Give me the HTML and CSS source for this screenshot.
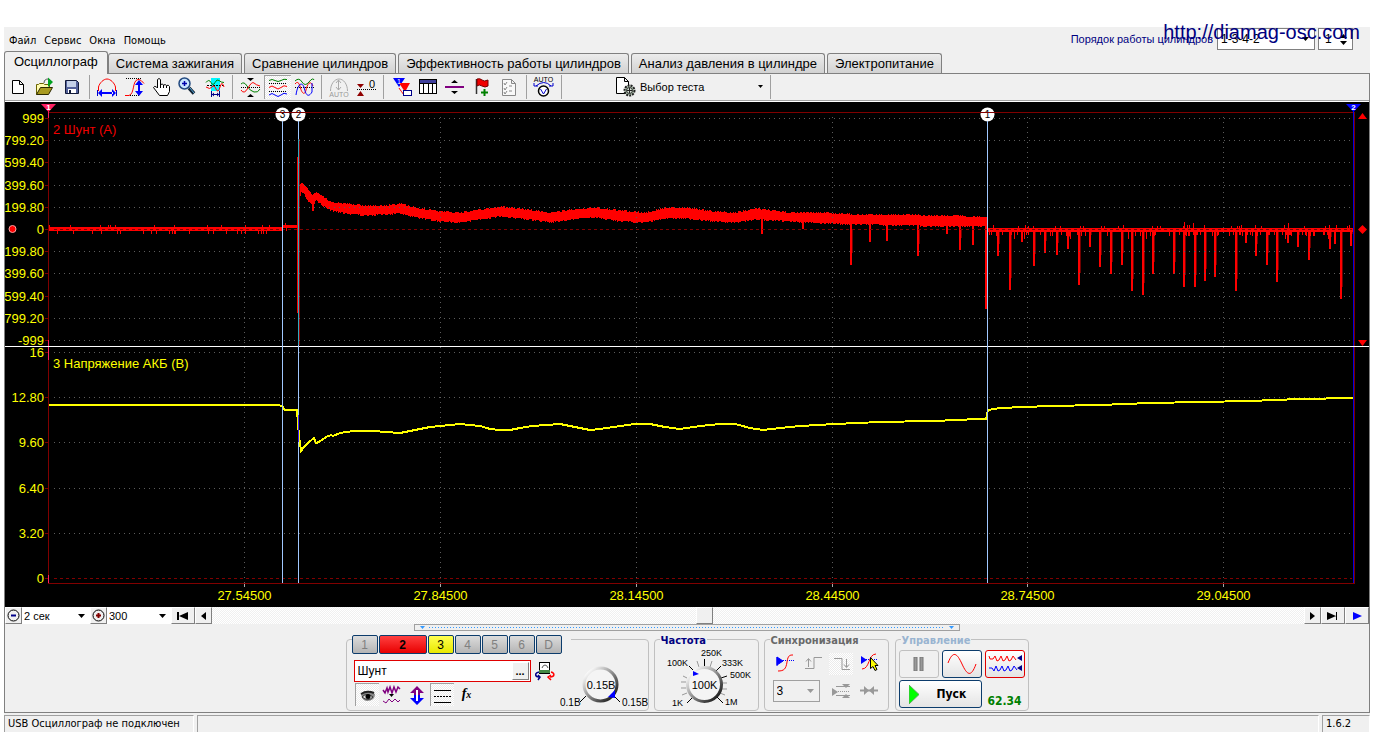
FILE: index.html
```html
<!DOCTYPE html>
<html lang="ru">
<head>
<meta charset="utf-8">
<title>USB Осциллограф</title>
<link rel="stylesheet" href="styles.css">
</head>
<body>
<a class="site-link" href="http://diamag-osc.com">http://diamag-osc.com</a>
<div class="app">
  <header class="header">
    <nav class="menu">
      <button>Файл</button><button>Сервис</button><button>Окна</button><button>Помощь</button>
    </nav>
    <div class="order">
      <label for="order">Порядок работы цилиндров</label>
      <span class="combo order-combo">
        <select id="order"><option>1-3-4-2</option></select>
        <svg width="7" height="4"><path d="M0 0h7L3.500 4z"/></svg>
      </span>
      <span class="combo spin">
        <input type="text" value="1" aria-label="Номер цилиндра">
        <svg width="7" height="11"><path d="M0 4h7L3.500 0zM0 7h7L3.500 11z"/></svg>
      </span>
    </div>
  </header>

  <div class="tabs" role="tablist">
    <button class="tab active" role="tab">Осциллограф</button>
    <button class="tab" role="tab">Система зажигания</button>
    <button class="tab" role="tab">Сравнение цилиндров</button>
    <button class="tab" role="tab">Эффективность работы цилиндров</button>
    <button class="tab" role="tab">Анализ давления в цилиндре</button>
    <button class="tab" role="tab">Электропитание</button>
  </div>

  <main class="page">
    <div class="toolbar">
      <button class="tool" aria-label="Новый"><svg viewBox="5 75 27 24"><path d="M12.500 80.500h7l4 4v9h-11zM19.500 80.500v4h4" fill="#fff" stroke="#000"/></svg></button>
      <button class="tool" aria-label="Открыть"><svg viewBox="32 75 27 24"><path d="M36.500 94.500v-10h2l1-1h4l1 1h5v3" fill="#fffbb0" stroke="#6b6400"/><path d="M36.500 94.500l4-7h12l-4 7z" fill="#a89a20" stroke="#2b2800"/><path d="M44 83c0-3 2-4 4-4" fill="none" stroke="#555"/><path d="M48 77.500l5 4.500-5 5z" fill="#00a020"/></svg></button>
      <button class="tool" aria-label="Сохранить"><svg viewBox="59 75 27 24"><path d="M65.500 80.500h11l2 2v11h-13z" fill="#52609a" stroke="#101838"/><path d="M67 81h9v6h-9z" fill="#c4d0e8"/><path d="M68 89h8v4h-8z" fill="#fff"/><path d="M69 90h2v3h-2z" fill="#101838"/></svg></button>
      <i class="sep"></i>
      <button class="tool" aria-label="Период"><svg viewBox="94 75 27 24"><path d="M98.500 91v-4c1-4 5-8 8.500-8s7.500 4 8.500 8v4" fill="none" stroke="#f00"/><path d="M97.500 90v6M116.500 90v6" stroke="#00c" fill="none"/><path d="M98 93l4-4v8zM116 93l-4-4v8zM101 92h12v2h-12z" fill="#00f"/></svg></button>
      <button class="tool" aria-label="Амплитуда"><svg viewBox="121 75 27 24"><path d="M126 78.500h16M126 95.500h14" stroke="#000" stroke-dasharray="1 1"/><path d="M125 95.500h4c6-2 3-15 9-16 3 0 4 2 6 4" fill="none" stroke="#f00"/><path d="M139 80l-4 5h3v6h-3l4 5 4-5h-3v-6h3z" fill="#00f"/></svg></button>
      <button class="tool" aria-label="Рука"><svg viewBox="148 75 27 24"><path d="M157.500 88v-8.500q1.500-2 3 0v5q2-1 3 .5q2-1 3 .5q2-1 3 1v5l-2 4h-8l-6-8q1-2 3-.5z" fill="#fff" stroke="#000"/><path d="M160.500 84v4M163.500 85v3M166.500 86v2" stroke="#000"/></svg></button>
      <button class="tool" aria-label="Лупа"><svg viewBox="175 75 27 24"><path d="M189 88l5 5.500" stroke="#123" stroke-width="3.500"/><path d="M190 88l4 5" stroke="#5ad"/><circle cx="184.500" cy="83.500" r="5.500" fill="#c8e4ff" stroke="#234a80" stroke-width="1.500"/><path d="M182 83.500h5M184.500 81v5" stroke="#00a" stroke-width="1.500"/></svg></button>
      <button class="tool" aria-label="Участок"><svg viewBox="202 75 27 24"><path d="M211 78h9v13h-9z" fill="#00f6ff"/><path d="M206 82.500q3-4 5 0t4 0 4-2 5 2" fill="none" stroke="#008000"/><path d="M207 85.500h17" stroke="#000" stroke-dasharray="2 1"/><path d="M206 87q4 3 6 0t4 2 4-2 4 0" fill="none" stroke="#f00"/><path d="M211.500 91v6M219.500 91v6M212 94.500h8" stroke="#008"/><path d="M212 94.500l2-2v4zM219 94.500l-2-2v4z" fill="#008"/></svg></button>
      <i class="sep"></i>
      <button class="tool" aria-label="Совместить"><svg viewBox="237 75 27 24"><path d="M241 87.500h19" stroke="#000" stroke-dasharray="1 1"/><path d="M241 84q3-3 6 2t7 6 6-3" fill="none" stroke="#008000"/><path d="M241 90q3 5 7-2t6-5 6 3" fill="none" stroke="#f00"/><path d="M247 78h7l-3.500 3zM247 97h7l-3.500-3z" fill="#000"/></svg></button>
      <button class="tool pressed" aria-label="Раздельно"><svg viewBox="264 75 27 24"><path d="M269 80.500q3-2 6 0t6 0 6-1" fill="none" stroke="#008000"/><path d="M269 83.500h18M269 91.500h18" stroke="#000" stroke-dasharray="1 1"/><path d="M269 87.500q3-3 6 0t6 0 6-1" fill="none" stroke="#f00"/><path d="M269 95q3-3 6 0t6 0 6-1" fill="none" stroke="#00f"/></svg></button>
      <button class="tool" aria-label="Наложить"><svg viewBox="291 75 27 24"><path d="M295 81q4-4 7 1t7 0 5-2" fill="none" stroke="#008000"/><path d="M295 87.500h19" stroke="#000" stroke-dasharray="1 1"/><path d="M295 84q3-4 5 2c2 9 5 9 6 4s4-11 7-4" fill="none" stroke="#f00"/><path d="M296 95c1-8 5-15 8-8 2 10 5 10 8 5V83" fill="none" stroke="#00f"/></svg></button>
      <i class="sep"></i>
      <button class="tool" aria-label="Авто масштаб" disabled><svg viewBox="326 75 27 24"><path d="M330.500 91c0-7 4-12 8.500-12s8.500 5 8.500 12" fill="none" stroke="#aaa"/><path d="M338.500 80v10M336 83l2.500-3 2.500 3M336 87l2.500 3 2.500-3" fill="none" stroke="#aaa"/><text class="t7" x="339" y="97" text-anchor="middle" fill="#999">AUTO</text></svg></button>
      <button class="tool" aria-label="Ноль"><svg viewBox="353 75 27 24"><path d="M357 84h7l-3.500 4zM357 96h7l-3.500-5z" fill="#900000"/><path d="M357 89.500h19" stroke="#000" stroke-dasharray="1 1"/><text class="t11" x="369" y="88">0</text></svg></button>
      <i class="sep"></i>
      <button class="tool" aria-label="Фильтр"><svg viewBox="388 75 27 24"><path d="M393 78h12l-6 9z" fill="#00f"/><path d="M399 83h11l-5 9z" fill="#f00"/><path d="M399 88q2 3 5 7" fill="none" stroke="#f00"/><rect x="403.500" y="90.500" width="8" height="5" fill="#fff" stroke="#008"/><text class="t7" x="397" y="84" fill="#fff">1</text></svg></button>
      <button class="tool" aria-label="Таблица"><svg viewBox="415 75 27 24" shape-rendering="crispEdges"><path d="M419.500 79.500h17v14h-17z" fill="#fff" stroke="#000"/><path d="M420 80h16v3h-16z" fill="#40409c"/><path d="M419 83.500h18M423.500 83v11M428.500 83v11M432.500 83v11" stroke="#000"/></svg></button>
      <button class="tool" aria-label="Линия"><svg viewBox="442 75 27 24"><path d="M445 86h19v2h-19z" fill="#800080"/><path d="M451 83h7l-3.500-3zM451 91h7l-3.500 3z"/></svg></button>
      <button class="tool" aria-label="Добавить метку"><svg viewBox="469 75 27 24"><path d="M476.500 79v15" stroke="#333" stroke-width="1.500"/><path d="M477 79q3-1 5 1t6 0v6q-3 2-6 0t-5 0z" fill="#f00000" stroke="#700"/><path d="M484.500 89v7M481 92.500h7" stroke="#008000" stroke-width="2"/></svg></button>
      <button class="tool" aria-label="Список" disabled><svg viewBox="496 75 27 24"><path d="M502.500 79.500h9l4 4v12h-13zM511.500 79.500v4h4" fill="#f8f8f8" stroke="#888"/><path d="M504 83l1 2 2-3M504 88l1 2 2-3M504 92l1 2 2-3M509 86h3M509 91h3" fill="none" stroke="#888"/></svg></button>
      <i class="sep"></i>
      <button class="tool" aria-label="Авто"><svg viewBox="531 75 27 24"><text class="t7" x="543.500" y="82" text-anchor="middle">AUTO</text><path d="M536 86q8-7 15 0M534 83v3h4M553 83v3h-4" fill="none" stroke="#00c"/><circle cx="543.500" cy="91" r="5" fill="#fff" stroke="#000" stroke-width="1.500"/><path d="M540.500 89l3 5 3-5" fill="none" stroke="#00c"/></svg></button>
      <i class="sep"></i>
      <button class="test-select">
        <svg width="22" height="24" viewBox="614 75 22 24"><path d="M616.500 77.500h8l4 4v12h-12zM624.500 77.500v4h4" fill="#fff" stroke="#000"/><circle cx="629.500" cy="90.500" r="5" fill="#b4c8b4" stroke="#222" stroke-width="2" stroke-dasharray="2 1"/><circle cx="629.500" cy="90.500" r="3" fill="#dde8dd" stroke="#222"/><path d="M627 90.500h5M629.500 88v5" stroke="#222"/></svg>
        <span>Выбор теста</span>
        <svg width="5" height="3"><path d="M0 0h5L2.500 3z"/></svg>
      </button>
      <i class="sep"></i>
    </div>

    <svg id="scope" class="scope" viewBox="5 102 1364 505" role="img" aria-label="Осциллограмма"></svg>

    <div class="scroll">
      <button class="sbtn s17" aria-label="Сжать"><svg width="13" height="13"><circle cx="6.500" cy="6.500" r="5.500" fill="none" stroke="#000"/><path d="M4 6.500h5" stroke="#008" stroke-width="2"/></svg></button>
      <span class="combo w68"><select aria-label="Развертка"><option>2 сек</option></select><svg width="7" height="4"><path d="M0 0h7L3.500 4z"/></svg></span>
      <button class="sbtn s17" aria-label="Растянуть"><svg width="13" height="13"><circle cx="6.500" cy="6.500" r="5.500" fill="none" stroke="#000"/><path d="M4 6.500h5M6.500 4v5" stroke="#800000" stroke-width="2"/></svg></button>
      <span class="combo w64"><select aria-label="Масштаб"><option>300</option></select><svg width="7" height="4"><path d="M0 0h7L3.500 4z"/></svg></span>
      <button class="sbtn s24" aria-label="В начало"><svg width="12" height="8"><path d="M0 0h2v8H0zM11 0v8L2 4z"/></svg></button>
      <button class="sbtn s17" aria-label="Назад"><svg width="5" height="8"><path d="M5 0v8L0 4z"/></svg></button>
      <div class="track"><i class="thumb"></i></div>
      <button class="sbtn s17" aria-label="Вперед"><svg width="5" height="8"><path d="M0 0v8l5-4z"/></svg></button>
      <button class="sbtn s24" aria-label="В конец"><svg width="12" height="8"><path d="M9 0h1v8H9zM0 0v8l9-4z"/></svg></button>
      <button class="sbtn s24" aria-label="Воспроизвести"><svg width="9" height="8"><path d="M0 0v8l9-4z" fill="#00f"/></svg></button>
    </div>

    <div class="splitter"><svg width="5" height="3"><path d="M0 0h5L2.500 3z"/></svg><i></i><svg width="5" height="3"><path d="M0 0h5L2.500 3z"/></svg></div>

    <div class="panels">
      <section class="group channel">
        <div class="channels">
          <button>1</button><button class="red">2</button><button class="yellow">3</button><button>4</button><button>5</button><button>6</button><button>D</button>
        </div>
        <div class="channel-body">
          <div>
            <div class="name-row">
              <span class="name"><input type="text" value="Шунт" aria-label="Имя датчика"><button>...</button></span>
              <button class="plain" aria-label="Датчик"><svg width="20" height="20" viewBox="534 661 20 20"><rect x="538.500" y="662.500" width="10" height="11" fill="#fff" stroke="#000"/><path d="M538 670h11v3h-11z" fill="#484"/><path d="M541 668q1-3 3-3t3 3" fill="none" stroke="#555"/><path d="M538 672c-5 1-4 5 0 5M537 675l2 2-2 3" fill="none" stroke="#008" stroke-width="1.500"/><path d="M550 672c4 1 4 5-1 5M550 675l-3 2 3 3" fill="none" stroke="#f00" stroke-width="1.500"/></svg></button>
            </div>
            <div class="toggles">
              <button class="on" aria-label="Показать"><svg width="22" height="20" viewBox="357 684 22 20"><path d="M362 693q6-6 12-1l2 1q0 7-8 7-5 0-6-7z" fill="#888"/><path d="M362 693q6-4 13-1" fill="none" stroke="#222" stroke-width="2"/><path d="M363 696q5-5 11 0-5 5-11 0z" fill="#ddd" stroke="#333"/><circle cx="369" cy="695.500" r="2.500"/></svg></button>
              <button aria-label="Сглаживание"><svg width="22" height="20" viewBox="382 683 22 20"><path d="M384 688l2 3 2-5 1 4 2-5 2 6 2-6 2 5 2-5 2 2" fill="none" stroke="#800080" stroke-width="1.500"/><path d="M390 692h5l-2.500 3z"/><path d="M384 699l3 2 3-4 3 3 3-3 3 3 2-2" fill="none" stroke="#800080"/></svg></button>
              <button aria-label="Инверсия"><svg width="22" height="22" viewBox="406 683 22 22"><path d="M417 685l7 7h-4v3h-6v-3h-4z" fill="#800080"/><path d="M417 704l7-7h-4v-3h-6v3h-4z" fill="#00f"/><path d="M417 689v11" stroke="#fff" stroke-width="2"/></svg></button>
              <button class="on" aria-label="Линии"><svg width="22" height="20" viewBox="432 684 22 20"><path d="M435 689.500h17M435 701.500h17" stroke="#000"/><path d="M435 695.500h17" stroke="#000" stroke-dasharray="2 1"/></svg></button>
              <button class="fx">f<small>x</small></button>
            </div>
          </div>
          <svg class="knob1" width="90" height="56" viewBox="558 655 90 56">
            <defs><linearGradient id="rim" x1="0" y1="0" x2="1" y2="1"><stop offset="0.100" stop-color="#fff"/><stop offset="1" stop-color="#000"/></linearGradient></defs>
            <circle cx="600.500" cy="684.500" r="16.500" fill="#f4f4f4" stroke="url(#rim)" stroke-width="3"/>
            <path d="M580 702l6-6M620 702l-6-6" stroke="#000"/>
            <path d="M615 690v8l-7-1z" fill="#00f"/>
            <text class="t11" x="601" y="689" text-anchor="middle">0.15В</text>
            <text class="t10" x="560" y="706">0.1В</text><text class="t10" x="622" y="706">0.15В</text>
          </svg>
        </div>
      </section>

      <section class="group freq">
        <h3 class="navy">Частота</h3>
        <svg width="103" height="64" viewBox="655 647 103 64">
          <path d="M687 703l6-6M723 703l-6-6M689 666l5 5M721 666l-5 5M704.500 659v7M727 676l-6 2" stroke="#000"/>
          <path d="M682 695l5-2M681 688h5M681 682h5M683 676l4 2M697 661l2 6M712 661l-2 6M727 683h-5M727 689h-5M725 695l-5-2" stroke="#999"/>
          <circle cx="704.500" cy="684.500" r="17" fill="#f4f4f4" stroke="url(#rim)" stroke-width="3"/>
          <path d="M693 671v5l6-2z" fill="#00f"/>
          <text class="t11" x="704.500" y="689" text-anchor="middle">100K</text>
          <text class="t9" x="701" y="656">250K</text><text class="t9" x="667" y="666">100K</text><text class="t9" x="722" y="666">333K</text><text class="t9" x="730" y="678">500K</text><text class="t9" x="672" y="706">1K</text><text class="t9" x="725" y="705">1M</text>
        </svg>
      </section>

      <section class="group sync">
        <h3 class="gray">Синхронизация</h3>
        <div class="sync-grid">
          <button aria-label="Авто"><svg width="24" height="22" viewBox="773 653 24 22"><path d="M777 657l6 4-6 4zM777 657v9" fill="#00f" stroke="#00f"/><path d="M783 660.500h11" stroke="#00f" stroke-dasharray="1 1"/><path d="M778 671c6 0 8-2 9-9s3-7 6-7" fill="none" stroke="#f00"/></svg></button>
          <button aria-label="Фронт"><svg width="24" height="22" viewBox="801 653 24 22"><path d="M805 668.500h9v-11h8M808.500 659v8M806 661.500l2.500-3 2.500 3" fill="none" stroke="#999"/></svg></button>
          <button class="dither" aria-label="Спад"><svg width="24" height="22" viewBox="829 653 24 22"><path d="M834 658.500h8v11h8M846.500 659v8M844 664.500l2.500 3 2.500-3" fill="none" stroke="#999"/></svg></button>
          <button aria-label="Выбор"><svg width="24" height="22" viewBox="857 653 24 22"><path d="M861 656l6 4-6 4z" fill="#00f"/><path d="M866 659.500h12" stroke="#00f" stroke-dasharray="1 1"/><path d="M862 669c8 0 6-15 14-15" fill="none" stroke="#f00"/><path d="M870.500 657.500v11l2.500-2 2 4 2-1-2-4h3z" fill="#ff0" stroke="#000"/></svg></button>
          <span class="combo sync-combo"><select aria-label="Канал синхронизации" disabled><option>3</option></select><svg width="7" height="4"><path d="M0 0h7L3.500 4z" fill="#999"/></svg></span>
          <button aria-label="Уровень" disabled><svg width="24" height="22" viewBox="831 679 24 22"><path d="M834 687l6 4-6 4zM844 683h8l-4 4zM844 697h8l-4-4z" fill="#999"/><path d="M838 685.500h14M838 694.500h14" stroke="#999"/><path d="M840 690.500h12" stroke="#999" stroke-dasharray="1 1"/></svg></button>
          <button aria-label="Центр" disabled><svg width="24" height="22" viewBox="858 680 24 22"><path d="M861 690.500h9M870 690.500h9" stroke="#999" stroke-width="2"/><path d="M865 686v9l5-4.500zM875 686v9l-5-4.500z" fill="#999"/></svg></button>
        </div>
      </section>

      <section class="group control">
        <h3 class="blue">Управление</h3>
        <div class="control-grid">
          <button class="off" aria-label="Пауза" disabled><svg width="12" height="14"><path d="M1 0h3v14H1zM7 0h3v14H7z" fill="#999" stroke="#777"/></svg></button>
          <button aria-label="Однократно"><svg width="30" height="22"><path d="M1 10C6-3 10 0 15 11S24 25 29 11" fill="none" stroke="#f00"/></svg></button>
          <button class="rec" aria-label="Запись"><svg width="34" height="20"><path d="M1 2l1 3h3l2-3 2 5 2-1 2-4 2 5 2-1 2-4 2 5 2-1 2-4 3 4" fill="none" stroke="#f00"/><path d="M1 14h3l2 3 2-5 2 5 2-1 2-4 2 5 2-1 2-4 2 5 2-1 2-4 3 4" fill="none" stroke="#00f"/><path d="M34 1v6l-5-3zM34 11v6l-5-3z" fill="#008"/></svg></button>
          <button class="start"><svg width="10" height="19"><path d="M0 0v19l10-9.500z" fill="#0f0" stroke="#5a5"/></svg><span>Пуск</span></button>
          <output>62.34</output>
        </div>
      </section>
    </div>
  </main>

  <footer class="status">
    <span class="s-left">USB Осциллограф не подключен</span><span class="s-mid"></span><span class="s-right">1.6.2</span>
  </footer>
</div>
<script src="scope.js"></script>
</body>
</html>
```
FILE: styles.css
```css
* { box-sizing: border-box; }
body {
  margin: 0;
  background: #fff;
  color: #000;
  font: 11px/14px "DejaVu Sans Condensed", "Liberation Sans", sans-serif;
}
button, select, input {
  margin: 0;
  padding: 0;
  border: 0;
  border-radius: 0;
  background: none;
  color: inherit;
  font: inherit;
  appearance: none;
}
svg { display: block; flex: none; }
.site-link {
  position: absolute;
  top: 21px;
  right: 14px;
  z-index: 2;
  color: #000080;
  text-decoration: none;
  font: 20px/23px "Liberation Sans", sans-serif;
}
.app { margin: 27px 4px 0; background: #f0f0f0; }

.header { display: flex; justify-content: space-between; height: 24px; padding-right: 17px; }
.menu { display: flex; align-items: center; padding: 4px 0 0 1px; }
.menu button { padding: 0 4px; }
.order { display: flex; align-items: flex-start; gap: 3px; padding-top: 1px; font: 12px/14px "Liberation Sans", sans-serif; }
.order label { color: #000080; line-height: 22px; font-size: 11px; padding-right: 1px; }

.combo { display: grid; align-items: center; background: #fff; font: 12px/14px "Liberation Sans", sans-serif; }
.combo > * { grid-area: 1 / 1; }
.combo select, .combo input { width: 100%; height: 100%; padding-left: 3px; }
.combo svg { justify-self: end; margin-right: 5px; pointer-events: none; }
.order-combo { width: 98px; height: 22px; border: 1px solid #808080; }
.spin { width: 35px; height: 22px; border: 1px solid #808080; }
.spin input { padding-left: 6px; }

.tabs { display: flex; align-items: flex-end; gap: 2px; height: 22px; }
.tab {
  height: 20px;
  padding: 0 7px;
  border: 1px solid #808080;
  border-bottom: 0;
  border-radius: 3px 3px 0 0;
  background: linear-gradient(#ececec, #d2d2d2);
  white-space: nowrap;
  font: 13px/18px "Liberation Sans", sans-serif;
}
.tab.active { z-index: 1; height: 23px; margin: 0 -2px -1px 0; padding: 0 9px 2px; background: #f0f0f0; }

.page { border: 1px solid #808080; }
.toolbar { display: flex; align-items: center; height: 28px; border-bottom: 1px solid #fff; box-shadow: inset 0 -1px #a0a0a0; padding-bottom: 2px; }
.tool { width: 27px; height: 24px; }
.tool svg { width: 27px; height: 24px; }
.pressed, .on, .dither { background: repeating-conic-gradient(#fff 0 25%, #ebebeb 0 50%) 0 0 / 2px 2px; }
.pressed, .on { box-shadow: inset 1px 1px #a0a0a0; }
.sep { width: 8px; height: 24px; border-right: 4px solid transparent; box-shadow: inset -1px 0 #a0a0a0; }
.test-select { display: flex; align-items: center; gap: 4px; width: 153px; margin-left: 48px; padding-right: 4px; font: 11px/14px "Liberation Sans", sans-serif; }
.test-select span { flex: 1; text-align: left; }

.scope { width: 100%; height: auto; background: #000; font-family: "Liberation Sans", sans-serif; font-size: 13px; }
.scope .axis { fill: #ff0; }
.scope .end { text-anchor: end; }
.scope .mid { text-anchor: middle; }
.scope .mark { font-size: 10px; }
.scope .grid { stroke: #5c5c5c; stroke-dasharray: 1 4; }
.scope .zero { stroke: #800000; stroke-dasharray: 3 3; }
.scope .frame { fill: none; stroke: #800000; }

.t7 { font: 7px "Liberation Sans", sans-serif; }
.t9 { font: 9px "Liberation Sans", sans-serif; }
.t10 { font: 10px "Liberation Sans", sans-serif; }
.t11 { font: 11px "Liberation Sans", sans-serif; }

.scroll { display: flex; height: 17px; background: #fff; }
.sbtn {
  display: grid;
  place-items: center;
  background: #f0f0f0;
  border: 1px solid;
  border-color: #fff #808080 #808080 #fff;
}
.s17 { width: 17px; }
.s24 { width: 24px; }
.scroll .combo { font-size: 11px; }
.scroll .combo select { padding-left: 2px; }
.w68 { width: 68px; }
.w64 { width: 64px; }
.track { flex: 1; padding-left: 35.500%; background: repeating-conic-gradient(#fff 0 25%, #f0f0f0 0 50%) 0 0 / 2px 2px; }
.thumb { display: block; width: 17px; height: 17px; background: #f0f0f0; border: 1px solid; border-color: #fff #808080 #808080 #fff; }

.splitter {
  display: flex;
  align-items: center;
  gap: 4px;
  width: 40%;
  height: 7px;
  margin: 0 auto;
  padding: 0 5px;
  border: 1px solid #a0a0a0;
  fill: #3399ff;
}
.splitter i { flex: 1; height: 1px; background: repeating-linear-gradient(90deg, #3399ff 0 1px, transparent 1px 3px); }

.panels { display: flex; justify-content: center; gap: 5px; padding: 8px 0 1px; }
.group { height: 72px; border: 1px solid #c0c0c0; border-radius: 4px; }
.group h3 {
  width: fit-content;
  margin: -5px 0 0 5px;
  padding: 0 1px;
  background: #f0f0f0;
  font: bold 11px/12px "DejaVu Sans Condensed", sans-serif;
}
.navy { color: #000080; }
.gray { color: #696969; }
.blue { color: #99b4d1; }

.channel { width: 303px; }
.channels { display: flex; gap: 1px; width: 219px; margin: -5px 0 0 5px; background: #f0f0f0; }
.channels button {
  width: 26px;
  height: 19px;
  border: 1px solid #0c3c6c;
  border-radius: 2px;
  background: linear-gradient(#dcdcdc, #b4b4b4);
  color: #808080;
  font: 12px/16px "Liberation Sans", sans-serif;
}
.channels .red { width: 48px; background: linear-gradient(#ff4040, #e80000); color: #000; font-weight: bold; }
.channels .yellow { background: linear-gradient(#ffff50, #e8e800); color: #000; }
.channel-body { display: flex; justify-content: space-between; padding-left: 7px; }
.name-row { display: flex; gap: 4px; padding-top: 6px; }
.name { display: flex; width: 177px; height: 22px; padding: 1px; background: #fff; border: 1px solid #e00000; }
.name input { flex: 1; min-width: 0; padding-left: 2px; font: 12px/14px "Liberation Sans", sans-serif; }
.name button { width: 17px; border: 1px solid; border-color: #fff #808080 #808080 #fff; background: #f0f0f0; font: bold 11px/8px "Liberation Sans", sans-serif; }
.toggles { display: flex; gap: 1px; padding: 1px 0 0 1px; }
.toggles button { display: grid; place-items: center; width: 24px; height: 23px; }
.toggles .fx { display: block; font: italic bold 14px/20px "Liberation Serif", serif; }
.fx small { font-size: 10px; }
.knob1 { margin-top: 1px; }

.freq { width: 105px; }
.sync { width: 125px; }
.sync-grid { display: grid; grid-template-columns: repeat(4, 24px); gap: 5px 4px; padding: 6px 0 0 8px; }
.sync-grid button { height: 22px; }
.sync-combo { grid-column: span 2; width: 47px; height: 22px; background: #f0f0f0; border: 1px solid #a0a0a0; }
.sync-combo select { opacity: 1; color: #000; }

.control { width: 134px; margin-left: 1px; }
.control-grid { display: grid; grid-template-columns: repeat(3, 40px); gap: 2px 3px; padding: 3px 0 0 3px; }
.control-grid button {
  display: flex;
  align-items: center;
  justify-content: center;
  height: 28px;
  border: 1px solid #0c3c6c;
  border-radius: 3px;
  background: linear-gradient(#fff, #e4e4e4);
}
.control-grid .off { border-color: #c0c0c0; background: #f0f0f0; }
.control-grid .rec { border-color: #e00000; }
.control-grid .start { grid-column: span 2; justify-content: flex-start; gap: 18px; padding-left: 9px; font: bold 12px/14px "DejaVu Sans Condensed", sans-serif; }
output { align-self: end; text-align: center; color: #008000; font: bold 12px/14px "DejaVu Sans Condensed", sans-serif; }

.status { display: flex; gap: 3px; padding-top: 2px; }
.status span { height: 17px; padding: 1px 3px 0; border: 1px solid #a0a0a0; border-right-color: #fff; border-bottom: 0; }
.s-left { width: 190px; white-space: nowrap; }
.s-mid { flex: 1; }
.s-right { width: 48px; }
```
FILE: scope.js
```javascript
(function () {
  var out = [];
  function add(s) { out.push(s); }
  function line(cls, x1, y1, x2, y2) {
    add('<path class="' + cls + '" d="M' + x1 + ' ' + y1 + 'L' + x2 + ' ' + y2 + '"/>');
  }
  function text(cls, x, y, s, fill) {
    add('<text class="' + cls + '" x="' + x + '" y="' + y + '"' + (fill ? ' fill="' + fill + '"' : '') + '>' + s + '</text>');
  }
  var seed = 7;
  function rnd() { seed = (seed * 16807) % 2147483647; return seed / 2147483647; }

  // Current envelope: x, top, bottom
  var env = [
    [49, 227, 231], [282, 227, 231], [283, 225, 228], [297, 225, 228], [299, 184, 200], [301, 183, 191],
    [304, 186, 194], [308, 190, 201], [312, 196, 205], [316, 192, 200], [322, 196, 205], [330, 202, 210],
    [345, 204, 213], [365, 206, 215], [385, 206, 214], [400, 204, 213], [415, 208, 217], [440, 212, 221],
    [460, 213, 222], [480, 210, 219], [500, 207, 216], [520, 209, 218], [550, 213, 222], [572, 210, 219],
    [595, 208, 217], [620, 211, 221], [645, 213, 222], [665, 208, 218], [685, 208, 218], [715, 212, 221],
    [735, 213, 222], [755, 209, 219], [790, 213, 221], [820, 213, 223], [860, 215, 224], [900, 215, 225],
    [940, 216, 226], [987, 217, 226], [988, 228, 232], [1353, 228, 232]
  ];
  // Downward spikes: x, lowest point
  var spikes = [
    [313, 211], [762, 234], [803, 229], [851, 265], [870, 242], [887, 241], [918, 256], [947, 234], [960, 250],
    [973, 245], [998, 256], [1010, 290], [1022, 242], [1034, 266], [1045, 253], [1057, 255], [1068, 249],
    [1079, 285], [1090, 247], [1100, 267], [1111, 274], [1122, 265], [1132, 291], [1143, 295], [1153, 274],
    [1174, 274], [1184, 287], [1195, 287], [1205, 281], [1215, 277], [1236, 291], [1246, 243], [1256, 256],
    [1267, 265], [1277, 282], [1288, 243], [1298, 247], [1309, 260], [1330, 249], [1335, 244], [1341, 299], [1351, 246]
  ];
  var voltage = [
    49, 405, 278, 405, 282, 406, 285, 410, 297, 410, 299, 436, 301, 451, 304, 447, 309, 442, 314, 438, 316, 443,
    319, 442, 326, 437, 331, 435, 333, 436, 340, 433, 353, 431, 375, 431, 385, 432, 400, 433, 410, 431, 420, 429,
    430, 427, 440, 426, 450, 425, 460, 424, 470, 425, 480, 426, 490, 429, 500, 430, 510, 430, 520, 428, 532, 426,
    547, 425, 560, 424, 575, 427, 590, 430, 600, 429, 620, 426, 635, 424, 650, 424, 665, 427, 680, 429, 700, 426,
    720, 424, 735, 424, 750, 428, 763, 430, 780, 428, 800, 426, 835, 424, 880, 422, 930, 421, 960, 420, 975, 419,
    986, 419, 988, 410, 1000, 408, 1050, 406, 1100, 405, 1150, 403, 1200, 402, 1250, 401, 1300, 399, 1353, 398
  ];

  var first = [118, 140, 162, 185, 207, 229, 251, 273, 296, 318, 340];
  var firstText = ['999', '799.20', '599.40', '399.60', '199.80', '0', '199.80', '399.60', '599.40', '799.20', '-999'];
  var second = [352, 397, 442, 488, 533, 578];
  var secondText = ['16', '12.80', '9.60', '6.40', '3.20', '0'];
  var times = [[244, '27.54500'], [440, '27.84500'], [636, '28.14500'], [832, '28.44500'], [1027, '28.74500'], [1223, '29.04500']];

  add('<g shape-rendering="crispEdges">');

  var d = '', shade = '', k = 0;
  for (var x = 49; x < 1353; x++) {
    while (env[k + 1][0] < x) k++;
    var a = env[k], b = env[k + 1], t = (x - a[0]) / (b[0] - a[0]);
    var top = a[1] + (b[1] - a[1]) * t, bot = a[2] + (b[2] - a[2]) * t;
    var wide = x > 300 && x < 987;
    if (rnd() < (wide ? 0.45 : 0.06)) top -= wide ? 1 : 2;
    if (rnd() < (wide ? 0.45 : 0.1)) bot += wide ? 1 : 3;
    if (x > 988 && rnd() < 0.12) bot += 4;
    if (x > 988 && rnd() < 0.04) top -= 3;
    top = Math.round(top); bot = Math.round(bot);
    d += 'M' + x + '.5 ' + top + 'V' + bot;
  }
  spikes.forEach(function (s) {
    var from = s[0] > 988 ? 229 : Math.min(218, s[1] - 10);
    d += 'M' + (s[0] - 0.5) + ' ' + from + 'V' + s[1] + 'M' + (s[0] + 0.5) + ' ' + from + 'V' + s[1];
    if (s[1] > 245) shade += 'M' + (s[0] + 1.5) + ' 229V' + (s[1] - 12);
  });
  add('<path d="' + shade + '" stroke="#700000"/>');
  add('<path d="' + d + 'M297.5 157V313M985.5 217V309M986.5 217V309M1184.500 222V230M1193.500 223V230M1288.500 223V230" stroke="#f00"/>');
  add('<path d="M299.500 139V345" stroke="#900000"/>');

  first.forEach(function (y) { line(y === 229 ? 'zero' : 'grid', 54, y + 0.5, 1352, y + 0.5); line('frame', 45, y + 0.5, 49, y + 0.5); });
  second.forEach(function (y) { line(y === 578 ? 'zero' : 'grid', 54, y + 0.5, 1352, y + 0.5); line('frame', 45, y + 0.5, 49, y + 0.5); });
  times.forEach(function (v) {
    line('grid', v[0] + 0.5, 117, v[0] + 0.5, 583);
    add('<path d="M' + v[0] + '.5 583v4" stroke="#aaa"/>');
  });
  add('<path class="frame" d="M48.500 112.500H1354.500V583.500H48.500z"/>');
  add('<path d="M48.500 109V118M48.500 340V360M48.500 575V583" stroke="#ff2060"/>');
  add('<path d="M1353.500 109V583" stroke="#0000e0"/>');
  add('<path d="M5 346.500H1369" stroke="#fff"/>');
  add('<polyline points="' + voltage.join(' ') + '" fill="none" stroke="#ff0" stroke-width="2"/>');
  add('</g>');

  [[282, '3'], [298, '2'], [987, '1']].forEach(function (c) {
    add('<circle cx="' + (c[0] + 0.5) + '" cy="114.500" r="7" fill="#fff"/>');
    text('mark mid', c[0] + 0.5, 118, c[1], '#000');
    add('<path d="M' + c[0] + '.5 121V583" stroke="#a0c8ff" shape-rendering="crispEdges"/>');
    add('<path d="M' + (c[0] - 7) + ' 112.500h15" stroke="#800000"/>');
  });
  add('<path d="M298.500 139V345" stroke="#30a8c0" shape-rendering="crispEdges"/><path d="M298.500 415V442" stroke="#4020ff" shape-rendering="crispEdges"/>');

  add('<path d="M41 104H56L48.500 112z" fill="#ff2060"/><path d="M1346 104H1361L1353.500 112z" fill="#00f"/>');
  add('<text x="48.500" y="110" font-size="8" font-weight="bold" fill="#fff" text-anchor="middle">1</text>');
  add('<text x="1353.500" y="110" font-size="8" font-weight="bold" fill="#fff" text-anchor="middle">2</text>');
  add('<path d="M1358 119h9l-4.500-6zM1358 340h9l-4.500 6zM1358 229.500l4.500-4.500 4.500 4.500-4.500 4.500z" fill="#f00"/>');
  add('<circle cx="12.500" cy="229" r="3.500" fill="#f00" stroke="#ffa0a0"/>');

  first.forEach(function (y, i) { text('axis end', 44, y + 5, firstText[i]); });
  second.forEach(function (y, i) { text('axis end', 44, y + 5, secondText[i]); });
  times.forEach(function (v) { text('axis mid', v[0] + 0.5, 600, v[1]); });
  text('', 53, 134, '2 Шунт (А)', '#f00000');
  text('axis', 53, 368, '3 Напряжение АКБ (В)');

  document.getElementById('scope').innerHTML = out.join('');
})();
```
